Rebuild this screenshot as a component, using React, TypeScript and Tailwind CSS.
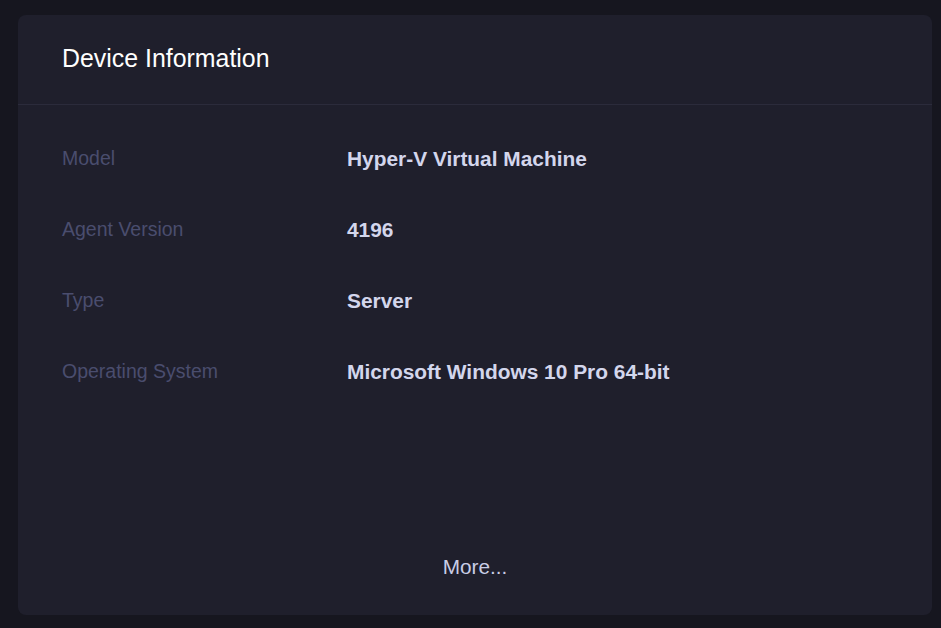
const rows = [
  { label: "Model", value: "Hyper-V Virtual Machine" },
  { label: "Agent Version", value: "4196" },
  { label: "Type", value: "Server" },
  { label: "Operating System", value: "Microsoft Windows 10 Pro 64-bit" },
];

export default function App() {
  return (
    <div
      className="min-h-screen w-full bg-[#16161f] pt-[15px] pl-[18px]"
      style={{ fontFamily: '"Liberation Sans", Arial, sans-serif' }}
    >
      <div className="flex h-[600px] w-[914px] flex-col rounded-lg bg-[#1f1f2c]">
        {/* header */}
        <div className="flex h-[90px] items-center border-b border-[#2b2b3b] px-[44px] pb-[2px]">
          <h2 className="text-[24.9px] leading-none text-white">Device Information</h2>
        </div>

        {/* details */}
        <div className="flex flex-1 flex-col px-[44px] pt-[17px]">
          {rows.map((row) => (
            <div key={row.label} className="flex h-[71px] items-center">
              <div className="w-[285px] pt-[2px] text-[19.5px] text-[#4a4d6e]">{row.label}</div>
              <div className="pt-[3px] text-[20.9px] font-bold text-[#d3d6ec]">{row.value}</div>
            </div>
          ))}
        </div>

        {/* footer */}
        <div className="flex justify-center pb-[37px]">
          <button className="text-[20.8px] leading-none text-[#c9cde6]">More...</button>
        </div>
      </div>
    </div>
  );
}
